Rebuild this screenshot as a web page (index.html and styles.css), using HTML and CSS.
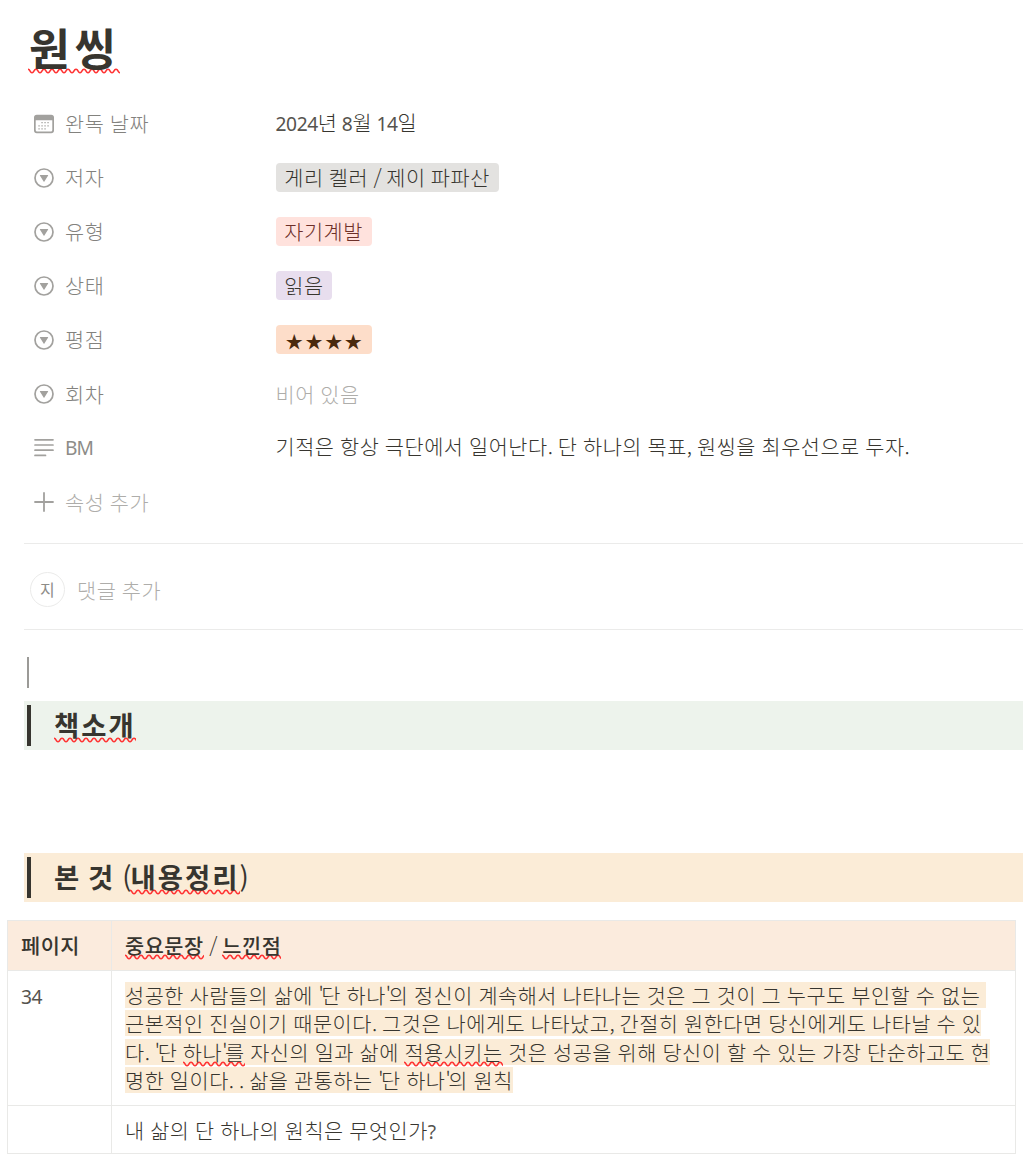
FILE: index.html
```html
<!DOCTYPE html>
<html lang="ko">
<head>
<meta charset="utf-8">
<title>원씽</title>
<link rel="stylesheet" href="styles.css">
</head>
<body>
<svg class="defs" aria-hidden="true">
  <symbol id="select" viewBox="0 0 20 20"><circle cx="10" cy="10" r="9" fill="none" stroke="currentColor" stroke-width="1.7"/><path d="M6.2 7h7.6a.4.4 0 0 1 .35.6l-3.75 6a.45.45 0 0 1-.8 0l-3.75-6A.4.4 0 0 1 6.2 7z" fill="currentColor"/></symbol>
</svg>
<main class="page">
  <h1 class="title"><span class="misspelled">원씽</span></h1>

  <dl class="properties">
    <div class="property">
      <dt><svg class="icon" viewBox="0 0 20 20"><path fill="currentColor" fill-rule="evenodd" d="M3.2.8h13.6A3 3 0 0 1 20 3.9v12.2a3 3 0 0 1-3.2 3.1H3.2A3 3 0 0 1 0 16.1V3.9A3 3 0 0 1 3.2.8zM1.7 6.2V16a1.6 1.6 0 0 0 1.7 1.6h13.2a1.6 1.6 0 0 0 1.7-1.6V6.2z"/><path stroke="currentColor" stroke-width="1.3" stroke-dasharray="1.3 1.7" d="M7.4 8.7h8.8M4.4 11.8h11.8M4.4 14.9h8.8"/></svg><span>완독 날짜</span></dt>
      <dd class="value date"><span class="num">2024</span>년 <span class="num">8</span>월 <span class="num">14</span>일</dd>
    </div>
    <div class="property">
      <dt><svg class="icon"><use href="#select"/></svg><span>저자</span></dt>
      <dd><span class="tag gray">게리 켈러 <span class="slash">/</span> 제이 파파산</span></dd>
    </div>
    <div class="property">
      <dt><svg class="icon"><use href="#select"/></svg><span>유형</span></dt>
      <dd><span class="tag red">자기계발</span></dd>
    </div>
    <div class="property">
      <dt><svg class="icon"><use href="#select"/></svg><span>상태</span></dt>
      <dd><span class="tag purple">읽음</span></dd>
    </div>
    <div class="property">
      <dt><svg class="icon"><use href="#select"/></svg><span>평점</span></dt>
      <dd><span class="tag orange">★★★★</span></dd>
    </div>
    <div class="property">
      <dt><svg class="icon"><use href="#select"/></svg><span>회차</span></dt>
      <dd class="empty">비어 있음</dd>
    </div>
    <div class="property">
      <dt><svg class="icon" viewBox="0 0 20 20"><path stroke="currentColor" stroke-width="1.7" stroke-linecap="round" d="M1 1.8h18M1 7h18M1 12.2h18M1 17.4h10.5"/></svg><span class="num label">BM</span></dt>
      <dd class="value">기적은 항상 극단에서 일어난다<span class="stop">.</span> 단 하나의 목표<span class="stop">,</span> 원씽을 최우선으로 두자<span class="stop">.</span></dd>
    </div>
    <div class="property add">
      <dt><svg class="icon" viewBox="0 0 20 20"><path stroke="currentColor" stroke-width="1.8" stroke-linecap="round" d="M1 10h18M10 1v18"/></svg><span>속성 추가</span></dt>
    </div>
  </dl>

  <section class="comment">
    <span class="avatar">지</span><span>댓글 추가</span>
  </section>

  <div class="caret"></div>

  <h2 class="quote green"><span><span class="misspelled">책소개</span></span></h2>
  <h2 class="quote yellow"><span>본 것 <span class="paren">(</span><span class="misspelled">내용정리</span><span class="paren">)</span></span></h2>

  <table class="notes">
    <tr><th>페이지</th><th><span class="misspelled">중요문장</span> <span class="slash">/</span> <span class="misspelled">느낀점</span></th></tr>
    <tr class="passage"><td><span class="num">34</span></td><td><span class="mark">성공한 사람들의 삶에 <span class="tick">'</span>단 하나<span class="tick">'</span>의 정신이 계속해서 나타나는 것은 그 것이 그 누구도 부인할 수 없는&nbsp;<br>근본적인 진실이기 때문이다<span class="stop">.</span> 그것은 나에게도 나타났고<span class="stop">,</span> 간절히 원한다면 당신에게도 나타날 수 있<br>다<span class="stop">.</span> <span class="tick">'</span>단 <span class="misspelled">하나<span class="tick">'</span>를</span> 자신의 일과 삶에 <span class="misspelled">적용시키는</span> 것은 성공을 위해 당신이 할 수 있는 가장 단순하고도 현<br>명한 일이다<span class="stop">.</span> <span class="stop">.</span> 삶을 관통하는 <span class="tick">'</span>단 하나<span class="tick">'</span>의 원칙</span></td></tr>
    <tr><td></td><td>내 삶의 단 하나의 원칙은 무엇인가<span class="num">?</span></td></tr>
  </table>
</main>
</body>
</html>
```
FILE: styles.css
```css
* { box-sizing: border-box; }

body {
  margin: 0;
  background: #fff;
  color: #37352f;
  font-family: "Noto Sans CJK KR", sans-serif;
  font-size: 20.8px;
  font-weight: 300;
  letter-spacing: .52px;
  word-spacing: -.8px;
  line-height: 28px;
  overflow: hidden;
}

.defs { display: none; }

.page {
  width: 1023px;
  height: 1155px;
  overflow: hidden;
}

.misspelled {
  background: url("data:image/svg+xml,%3Csvg xmlns='http://www.w3.org/2000/svg' width='8' height='6'%3E%3Cpath d='M-1 1.9Q0 .5 1.3 1.9L2.7 4Q4 5.5 5.3 4L6.7 1.9Q8 .5 9.3 1.9' fill='none' stroke='%23f33' stroke-width='1.6'/%3E%3C/svg%3E") repeat-x left bottom;
}

.num {
  color: #55534e;
  font-family: "Noto Sans", sans-serif;
  font-size: 19.2px;
  font-weight: 400;
  letter-spacing: -.4px;
  line-height: 1;
}
.label { color: #8d8c88; letter-spacing: -1px; }
.tick { letter-spacing: -2.4px; }
.stop { letter-spacing: -.6px; }
.slash { font-weight: 300; letter-spacing: -.6px; }

.title {
  margin: 0;
  padding: 19px 0 0 28px;
  height: 96px;
  font-size: 44.5px;
  font-weight: 700;
  letter-spacing: 4.6px;
  line-height: 56px;
  text-indent: 1px;
}
.title .misspelled {
  margin-left: -1px;
  padding-left: 1px;
  background-position: left calc(100% - 5px);
}

.properties { margin: 0; }

.property {
  display: flex;
  align-items: center;
  height: 54.1px;
}

.property dt {
  display: flex;
  align-items: center;
  gap: 11px;
  width: 242px;
  padding-left: 34px;
  color: #83827e;
}

.property dd { margin: 0 0 0 33.5px; }
.property .value { padding-bottom: 3px; }
.date { word-spacing: -2px; }
.icon {
  width: 20px;
  height: 20px;
  margin-top: 1px;
  color: #a2a19e;
}

.empty, .add dt, .comment { color: #aeadaa; }

.tag {
  display: block;
  height: 29px;
  padding: 0 8.8px;
  border-radius: 4px;
}
.gray { background: #e3e2e0; word-spacing: -1.1px; }
.red { background: #ffe2dd; color: #6d3029; }
.purple { background: #e8deee; }
.orange {
  padding: 2px 8px 0 10px;
  background: #fdddc9;
  color: #49290e;
  font-size: 17.5px;
  letter-spacing: 2.2px;
}

.comment {
  display: flex;
  align-items: center;
  gap: 12px;
  height: 87px;
  margin: 14px 0 0 24px;
  padding: 7px 0 0 6px;
  border: solid #ebebea;
  border-width: 1px 0;
}
.avatar {
  width: 35px;
  height: 35px;
  border: 1px solid #ebebea;
  border-radius: 50%;
  color: #8d8c88;
  font-size: 16px;
  font-weight: 400;
  line-height: 33px;
  text-align: center;
}

.caret {
  width: 2px;
  height: 31px;
  margin: 27px 0 13px 27px;
  background: #9b9a97;
}

.quote {
  display: flex;
  height: 49px;
  margin: 0 0 0 24px;
  font-size: 27.4px;
  letter-spacing: 2.1px;
  word-spacing: -3px;
  line-height: 38px;
  font-weight: 600;
  padding: 4px 3px;
}
.quote::before {
  content: "";
  width: 4px;
  margin-right: 23px;
  background: #37352f;
}
.quote .misspelled { background-position: left calc(100% - 1px); }
.paren { font-weight: 400; letter-spacing: -1px; }
.green { background: #edf3ec; }
.yellow { margin-top: 103px; background: #fbecd7; }

.notes {
  width: 1009px;
  margin: 18px 0 0 7px;
  border-collapse: collapse;
  table-layout: fixed;
}
.notes th, .notes td {
  height: 48px;
  padding: 10px 13px 9px;
  border: 1px solid #e9e9e7;
  text-align: left;
  vertical-align: top;
  white-space: nowrap;
  line-height: 28.5px;
}
.notes th {
  height: 50px;
  background: #fbebdd;
  font-weight: 500;
}
.notes th:first-child { width: 104px; }
.notes .passage td { height: 135px; }
.mark {
  background: linear-gradient(transparent 2px, #fbecd7 2px, #fbecd7 28.5px, transparent 28.5px);
  -webkit-box-decoration-break: clone;
  box-decoration-break: clone;
}
```
